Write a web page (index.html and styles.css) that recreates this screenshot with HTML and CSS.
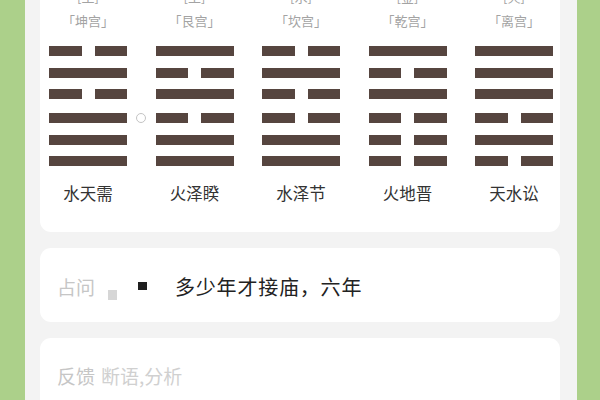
FILE: index.html
```html
<!DOCTYPE html>
<html lang="zh">
<head>
<meta charset="utf-8">
<link rel="stylesheet" href="styles.css">
</head>
<body>
<div class="page">
  <div class="card gua-card">
    <div class="gua-grid">
      <div class="gua">
        <div class="elem">[土]</div>
        <div class="palace">「坤宫」</div>
        <div class="hex">
          <div class="yao yin"><i></i><i></i></div>
          <div class="yao yang"><i></i></div>
          <div class="yao yin"><i></i><i></i></div>
          <div class="yao yang tri"><i></i><span class="moving"></span></div>
          <div class="yao yang"><i></i></div>
          <div class="yao yang"><i></i></div>
        </div>
        <div class="name">水天需</div>
      </div>
      <div class="gua">
        <div class="elem">[土]</div>
        <div class="palace">「艮宫」</div>
        <div class="hex">
          <div class="yao yang"><i></i></div>
          <div class="yao yin"><i></i><i></i></div>
          <div class="yao yang"><i></i></div>
          <div class="yao yin tri"><i></i><i></i></div>
          <div class="yao yang"><i></i></div>
          <div class="yao yang"><i></i></div>
        </div>
        <div class="name">火泽睽</div>
      </div>
      <div class="gua">
        <div class="elem">[水]</div>
        <div class="palace">「坎宫」</div>
        <div class="hex">
          <div class="yao yin"><i></i><i></i></div>
          <div class="yao yang"><i></i></div>
          <div class="yao yin"><i></i><i></i></div>
          <div class="yao yin tri"><i></i><i></i></div>
          <div class="yao yang"><i></i></div>
          <div class="yao yang"><i></i></div>
        </div>
        <div class="name">水泽节</div>
      </div>
      <div class="gua">
        <div class="elem">[金]</div>
        <div class="palace">「乾宫」</div>
        <div class="hex">
          <div class="yao yang"><i></i></div>
          <div class="yao yin"><i></i><i></i></div>
          <div class="yao yang"><i></i></div>
          <div class="yao yin tri"><i></i><i></i></div>
          <div class="yao yin"><i></i><i></i></div>
          <div class="yao yin"><i></i><i></i></div>
        </div>
        <div class="name">火地晋</div>
      </div>
      <div class="gua">
        <div class="elem">[火]</div>
        <div class="palace">「离宫」</div>
        <div class="hex">
          <div class="yao yang"><i></i></div>
          <div class="yao yang"><i></i></div>
          <div class="yao yang"><i></i></div>
          <div class="yao yin tri"><i></i><i></i></div>
          <div class="yao yang"><i></i></div>
          <div class="yao yin"><i></i><i></i></div>
        </div>
        <div class="name">天水讼</div>
      </div>
    </div>
  </div>

  <div class="card field question">
    <span class="label">占问</span>
    <span class="dot-grey"></span>
    <span class="dot-black"></span>
    <span class="value">多少年才接庙，六年</span>
  </div>

  <div class="card field feedback">
    <span class="label">反馈</span>
    <span class="hint">断语,分析</span>
  </div>
</div>
</body>
</html>
```

FILE: styles.css
```css
* { box-sizing: border-box; }
html, body {
  margin: 0;
  padding: 0;
  width: 600px;
  height: 400px;
  overflow: hidden;
  background: #acd08a;
  font-family: "Noto Sans CJK SC", "Noto Sans", sans-serif;
}
.page {
  margin: 0 23px 0 25px;
  height: 400px;
  background: #f3f3f3;
  padding: 0 17px 0 15px;
  display: flex;
  flex-direction: column;
  overflow: hidden;
}
.card {
  background: #fff;
  border-radius: 11px;
  flex-shrink: 0;
}
.gua-card {
  margin-top: -30px;
  padding: 18px 7px 28px 9px;
}
.gua-grid {
  display: grid;
  grid-template-columns: repeat(5, 78px);
  column-gap: 28.5px;
}
.gua {
  display: flex;
  flex-direction: column;
  align-items: center;
}
.elem, .palace {
  font-size: 13px;
  line-height: 18px;
  color: #a3a3a3;
  white-space: nowrap;
}
.palace { margin-top: 6px; }
.hex {
  margin-top: 16px;
  width: 78px;
  display: flex;
  flex-direction: column;
  gap: 11.5px;
}
.yao {
  position: relative;
  height: 10px;
  display: flex;
  gap: 13px;
}
.yao.tri { margin-top: 2.5px; }
.yao i {
  flex: 1;
  background: #56453f;
}
.moving {
  position: absolute;
  right: -19px;
  top: 0;
  width: 10px;
  height: 10px;
  border: 1px solid #c4c4c4;
  border-radius: 50%;
  background: #fff;
}
.name {
  margin-top: 16px;
  font-size: 16.5px;
  line-height: 22px;
  color: #333;
  white-space: nowrap;
}
.field {
  margin-top: 16px;
  display: flex;
  align-items: center;
  padding-left: 17px;
}
.question {
  height: 74px;
  padding-top: 3px;
}
.feedback {
  padding-top: 24px;
  height: 100px;
  align-items: flex-start;
}
.label {
  font-size: 19px;
  line-height: 28px;
  color: #c6c6c6;
}
.dot-grey {
  width: 9px;
  height: 10px;
  background: #d6d6d6;
  margin-left: 13px;
  align-self: center;
  transform: translateY(8px);
}
.dot-black {
  width: 9px;
  height: 8px;
  background: #1f1f1f;
  margin-left: 21px;
  transform: translateY(-1px);
}
.value {
  margin-left: 28px;
  font-size: 20px;
  line-height: 28px;
  color: #222;
  letter-spacing: 0.8px;
}
.hint {
  margin-left: 6px;
  font-size: 19px;
  line-height: 28px;
  color: #d0d0d0;
}
```
